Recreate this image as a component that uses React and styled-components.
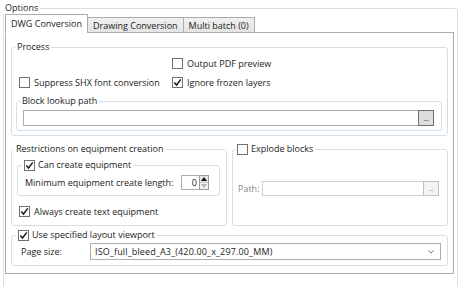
import React from 'react';
import styled, { createGlobalStyle } from 'styled-components';

const Global = createGlobalStyle`
  html, body { margin: 0; padding: 0; background: #fff; }
  body {
    font-family: "Open Sans", "Noto Sans", sans-serif;
    font-size: 9px;
    color: #1b1b1b;
  }
  #root { width: 460px; height: 286px; overflow: hidden; }
`;

const Page = styled.div`
  box-sizing: border-box;
  width: 460px;
  height: 286px;
  overflow: hidden;
  padding: 2px 2px 0 3px;
`;

const Group = styled.fieldset`
  margin: ${p => p.$m || '0'};
  min-width: 0;
  box-sizing: border-box;
  border: 1px solid #d5dfe5;
  border-radius: 3px;
  padding: ${p => p.$pad || '0'};
  height: ${p => p.$h || 'auto'};
`;

const Legend = styled.legend`
  margin-left: ${p => p.$ml || '0'};
  padding: 0 2px;
  line-height: 12px;
  height: 12px;
  display: flex;
  align-items: center;
  gap: 3px;
  white-space: nowrap;
`;

const TabRow = styled.div`
  display: flex;
  align-items: flex-end;
  height: 19px;
  margin-bottom: -1px;
  position: relative;
  z-index: 1;
`;

const Tab = styled.div`
  box-sizing: border-box;
  height: ${p => (p.$active ? '19px' : '16px')};
  padding: ${p => (p.$active ? '0 5px 1px' : '0 5px')};
  margin-left: ${p => (p.$first ? '0' : '-1px')};
  border: 1px solid #acacac;
  border-bottom-color: ${p => (p.$active ? '#fff' : '#acacac')};
  background: ${p => (p.$active ? '#fff' : 'linear-gradient(#f0f0f0, #e5e5e5)')};
  display: flex;
  align-items: center;
  white-space: nowrap;
`;

const Panel = styled.div`
  box-sizing: border-box;
  width: 449px;
  height: 242px;
  border: 1px solid #acacac;
  background: #fff;
  padding: 8px 5px 0;
`;

const Row = styled.div`
  display: flex;
  align-items: center;
  height: ${p => p.$h || '14px'};
  margin: ${p => p.$m || '0'};
`;

const CheckItem = styled.label`
  display: flex;
  align-items: center;
  gap: 4px;
  width: ${p => p.$w || 'auto'};
  white-space: nowrap;
`;

const Box = styled.span`
  box-sizing: border-box;
  width: 11px;
  height: 11px;
  border: 1px solid #707070;
  background: #fff;
  display: inline-flex;
  align-items: center;
  justify-content: center;
  flex: none;
`;

const Check = ({ checked }) => (
  <Box>
    {checked && (
      <svg width="9" height="9" viewBox="0 0 9 9">
        <path d="M1.3 4.6 L3.5 7 L7.8 1.4" fill="none" stroke="#1a1a1a" strokeWidth="1.5" />
      </svg>
    )}
  </Box>
);

const PathRow = styled.div`
  display: flex;
  align-items: stretch;
  height: ${p => p.$h || '16px'};
  margin: ${p => p.$m || '0'};
`;

const TextBox = styled.div`
  box-sizing: border-box;
  flex: 1;
  border: 1px solid ${p => (p.$disabled ? '#cfd3d6' : '#abadb3')};
  border-right: none;
  background: #fff;
`;

const DotButton = styled.div`
  box-sizing: border-box;
  width: 16px;
  border: 1px solid ${p => (p.$disabled ? '#bfc4c7' : '#707070')};
  background: ${p => (p.$disabled ? '#f4f4f4' : '#dddddd')};
  display: flex;
  align-items: flex-end;
  justify-content: center;
  padding-bottom: 3px;
  font-size: 8px;
  line-height: 8px;
  letter-spacing: -0.5px;
  color: ${p => (p.$disabled ? '#9a9a9a' : '#333')};
`;

const Cols = styled.div`
  display: grid;
  grid-template-columns: 216px 1fr;
  gap: 5px;
  margin-top: 7px;
`;

const FieldLabel = styled.span`
  white-space: nowrap;
  color: ${p => (p.$disabled ? '#8a8a8a' : 'inherit')};
  width: ${p => p.$w || 'auto'};
  flex: none;
  align-self: center;
`;

const Numeric = styled.div`
  display: flex;
  height: 15px;
  margin-left: auto;
`;

const NumText = styled.div`
  box-sizing: border-box;
  width: 18px;
  border: 1px solid #abadb3;
  border-right: none;
  display: flex;
  align-items: center;
  justify-content: flex-end;
  padding-right: 2px;
`;

const Spinner = styled.div`
  box-sizing: border-box;
  width: 10px;
  display: flex;
  flex-direction: column;
  border: 1px solid #9a9a9a;
`;

const SpinHalf = styled.div`
  flex: 1;
  background: ${p => (p.$dim ? '#f2f2f2' : '#e4e4e4')};
  display: flex;
  align-items: center;
  justify-content: center;
  border-top: ${p => (p.$dim ? '1px solid #c8c8c8' : 'none')};
`;

const Combo = styled.div`
  box-sizing: border-box;
  flex: 1;
  height: 17px;
  border: 1px solid #acacac;
  background: #fff;
  display: flex;
  align-items: center;
  padding: 0 6px 0 4px;
  justify-content: space-between;
  white-space: nowrap;
`;

const ComboText = styled.span`
  letter-spacing: 0.15px;
`;

export default function App() {
  return (
    <Page>
      <Global />
      <Group $h="292px" $pad="0 3px 0 1px">
        <Legend $ml="-2px">Options</Legend>
        <TabRow>
          <Tab $active $first>DWG Conversion</Tab>
          <Tab>Drawing Conversion</Tab>
          <Tab>Multi batch (0)</Tab>
        </TabRow>
        <Panel>
          <Group $pad="0 5px 4px 4px">
            <Legend $ml="-1px">Process</Legend>
            <Row $m="3px 0 0 156px">
              <CheckItem>
                <Check />
                Output PDF preview
              </CheckItem>
            </Row>
            <Row $m="5px 0 0 3px">
              <CheckItem $w="153px">
                <Check />
                Suppress SHX font conversion
              </CheckItem>
              <CheckItem>
                <Check checked />
                Ignore frozen layers
              </CheckItem>
            </Row>
            <Group $m="6px 0 0 0" $pad="3px 7px 4px 6px">
              <Legend $ml="-3px">Block lookup path</Legend>
              <PathRow>
                <TextBox />
                <DotButton>...</DotButton>
              </PathRow>
            </Group>
          </Group>

          <Cols>
            <Group $pad="4px 6px 0 5px" $h="83px">
              <Legend $ml="-3px">Restrictions on equipment creation</Legend>
              <Group $pad="4px 10px 5px 7px">
                <Legend $ml="-3px">
                  <Check checked />
                  Can create equipment
                </Legend>
                <Row $h="15px">
                  <FieldLabel>Minimum equipment create length:</FieldLabel>
                  <Numeric>
                    <NumText>0</NumText>
                    <Spinner>
                      <SpinHalf>
                        <svg width="6" height="4" viewBox="0 0 6 4">
                          <path d="M0 4 L3 0 L6 4 Z" fill="#111" />
                        </svg>
                      </SpinHalf>
                      <SpinHalf $dim>
                        <svg width="6" height="4" viewBox="0 0 6 4">
                          <path d="M0 0 L3 4 L6 0 Z" fill="#b8b8b8" />
                        </svg>
                      </SpinHalf>
                    </Spinner>
                  </Numeric>
                </Row>
              </Group>
              <Row $m="8px 0 0 2px">
                <CheckItem>
                  <Check checked />
                  Always create text equipment
                </CheckItem>
              </Row>
            </Group>

            <Group $pad="0 8px 0 5px" $h="83px">
              <Legend $ml="-3px">
                <Check />
                Explode blocks
              </Legend>
              <PathRow $m="26px 0 0 0" $h="15px">
                <FieldLabel $disabled $w="24px">
                  Path:
                </FieldLabel>
                <TextBox $disabled />
                <DotButton $disabled>...</DotButton>
              </PathRow>
            </Group>
          </Cols>

          <Group $m="3px 0 0 0" $pad="2px 6px 5px 9px">
            <Legend $ml="-5px">
              <Check checked />
              Use specified layout viewport
            </Legend>
            <Row $h="17px">
              <FieldLabel $w="69px">Page size:</FieldLabel>
              <Combo>
                <ComboText>ISO_full_bleed_A3_(420.00_x_297.00_MM)</ComboText>
                <svg width="6" height="4" viewBox="0 0 6 4">
                  <path d="M0.5 0.5 L3 3 L5.5 0.5" fill="none" stroke="#777" strokeWidth="1" />
                </svg>
              </Combo>
            </Row>
          </Group>
        </Panel>
      </Group>
    </Page>
  );
}
